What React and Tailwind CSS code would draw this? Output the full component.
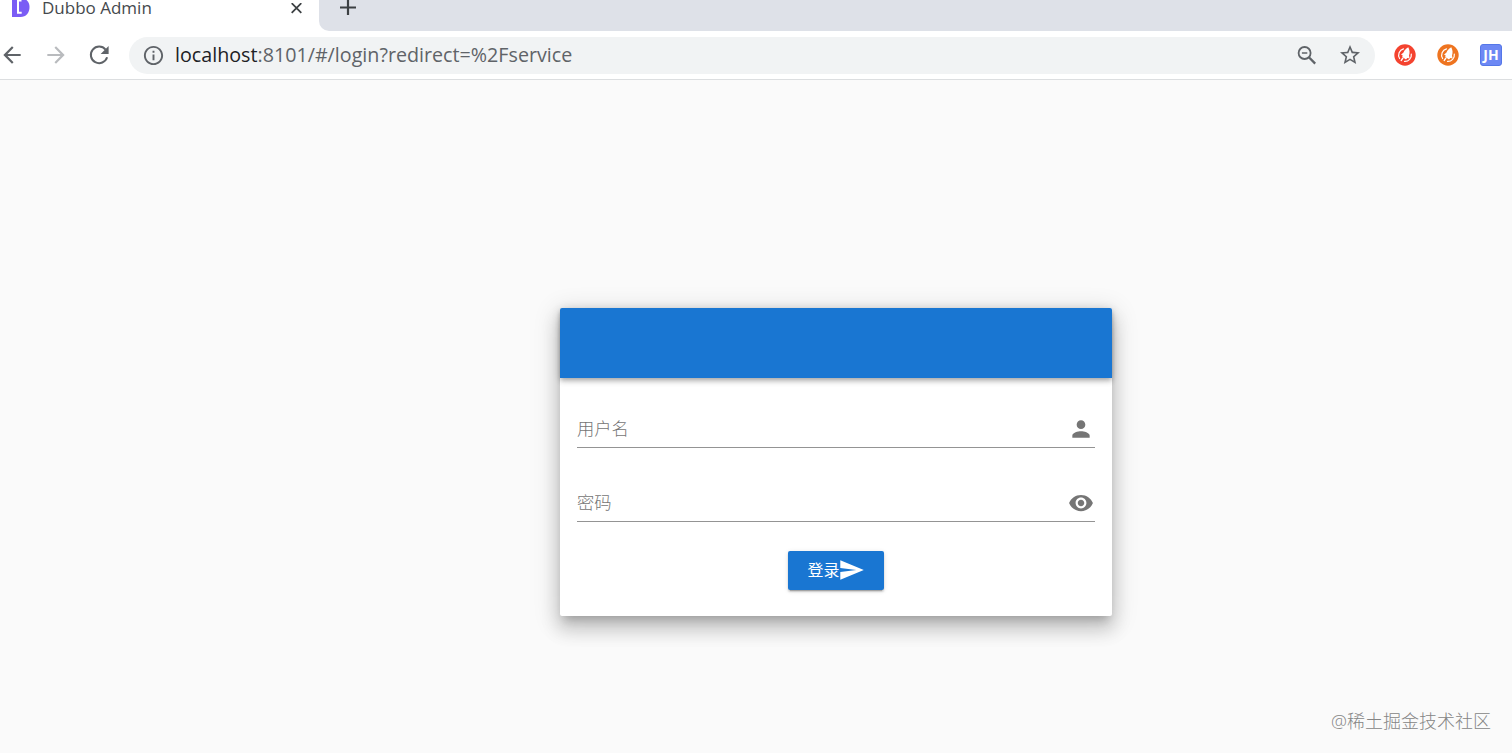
import React from 'react';
import {
    MdArrowBack,
    MdArrowForward,
    MdInfoOutline,
    MdPerson,
    MdStarBorder,
    MdVisibility,
} from 'react-icons/md';

function RocketBadge({ color }) {
    return (
        <svg width="22" height="22" viewBox="0 0 22 22" className="shrink-0">
            <circle cx="11" cy="11" r="10.7" fill={color}/>
            <path d="M9.500 4.800A6.500 6.500 0 0 0 5.600 14.500M10.500 17.400A6.500 6.500 0 0 0 17.300 10" fill="none" stroke="#fff" strokeWidth="1.200" strokeLinecap="round"/>
            <path d="M14.300 3.300C15.800 6.500 15.900 9 15 11.500L15.600 14.500L13.300 14L12 15.500L8.300 13L8.500 11L6.900 10.800L9.500 8.500C10.500 6.200 12 4.500 14.300 3.300z" fill="#fff"/>
            <path d="M8.800 14.200l-1.500 2.200" stroke="#fff" strokeWidth="1.500" strokeLinecap="round"/>
        </svg>
    );
}

function ReloadIcon() {
    return (
        <svg width="28" height="28" viewBox="0 0 28 28" className="ml-4 shrink-0">
            <path d="M20.600 8.600A8.300 8.300 0 1 0 22.100 16.300" fill="none" stroke="currentColor" strokeWidth="2"/>
            <path d="M23.600 5v8h-8z" fill="currentColor"/>
        </svg>
    );
}

function ZoomOutIcon() {
    return (
        <svg width="25" height="25" viewBox="0 0 25 25" className="shrink-0">
            <circle cx="10.600" cy="10" r="6" fill="none" stroke="currentColor" strokeWidth="1.800"/>
            <path d="M7.900 10h5.400" stroke="currentColor" strokeWidth="1.500"/>
            <path d="M14.900 14.300l6.300 6.300" stroke="currentColor" strokeWidth="2.300"/>
        </svg>
    );
}

function SendIcon() {
    return (
        <svg width="25" height="20" viewBox="0 0 25 20" className="shrink-0">
            <path d="M0.300 0.300L23.800 10L0.300 19.700V12L16.300 10L0.300 8z" fill="currentColor"/>
        </svg>
    );
}

function TabStrip() {
    return (
        <div className="flex h-[31px] bg-white">
            <div className="flex h-[17px] w-[319px] shrink-0 items-center pl-[11px]">
                <svg width="19" height="17" viewBox="0 0 19 17" className="shrink-0">
                    <path d="M1 0h14.500c2 1.700 3 4 3 7 0 6-3.500 10-9 10H1z" fill="#7a5cf5"/>
                    <path d="M10.500 0.500H7v12.300h3.700" fill="none" stroke="#fff" strokeWidth="2"/>
                </svg>
                <span className="ml-3 w-[249px] pb-0.5 text-[17px] leading-[17px] text-[#45494d]">Dubbo Admin</span>
                <svg width="11" height="12" viewBox="0 0 11 12" className="shrink-0">
                    <path d="M0.700 0.200l9.600 9.600M10.300 0.200l-9.600 9.600" stroke="#3c4043" strokeWidth="1.800"/>
                </svg>
            </div>
            <div className="flex flex-1 rounded-bl-[10px] bg-[#dee1e8] pl-[21px]">
                <svg width="16" height="16" viewBox="0 0 16 16" className="shrink-0">
                    <path d="M8 0v15M0 7.500h16" stroke="#3c4043" strokeWidth="2.200"/>
                </svg>
            </div>
        </div>
    );
}

function Toolbar() {
    return (
        <div className="flex h-[49px] items-center border-b border-[#dcdee0] bg-white pr-[10px] text-[#5f6368]">
            <MdArrowBack size={26} className="-ml-px shrink-0"/>
            <MdArrowForward size={26} className="ml-[18px] shrink-0 text-[#b9bbbe]"/>
            <ReloadIcon/>
            <div className="ml-4 flex h-[37px] flex-1 items-center rounded-full bg-[#f1f3f4] pl-[13px] pr-[13px]">
                <MdInfoOutline size={23} className="shrink-0"/>
                <span className="ml-[10px] flex-1 whitespace-nowrap text-[19.700px] leading-none">
                    <span className="text-[#202124]">localhost</span>:8101/#/login?redirect=%2Fservice
                </span>
                <ZoomOutIcon/>
                <MdStarBorder size={24} className="ml-[19px] shrink-0"/>
            </div>
            <div className="ml-[19px] flex items-center gap-[21px]">
                <RocketBadge color="#f4432f"/>
                <RocketBadge color="#ee7420"/>
                <div className="flex h-[22px] w-[22px] items-center justify-center rounded-[3px] border border-[#5577e8] bg-[#6d88f4] text-[14px] font-bold leading-none text-white">
                    JH
                </div>
            </div>
        </div>
    );
}

function Field({ label, icon: Icon }) {
    return (
        <div className="flex h-[37px] items-center justify-between border-b border-[#949494] pr-px text-[#757575]">
            <span className="text-[17.300px] font-light leading-none">{label}</span>
            <Icon size={26} className="shrink-0"/>
        </div>
    );
}

function LoginCard() {
    return (
        <div className="flex h-[308px] w-[552px] flex-col rounded-[2px] bg-white shadow-[0_7px_9px_-4px_rgba(0,0,0,0.2),0_13px_18px_2px_rgba(0,0,0,0.14),0_5px_24px_4px_rgba(0,0,0,0.12)]">
            <div className="h-[70px] rounded-t-[2px] bg-[#1976d2] shadow-[0_2px_4px_-1px_rgba(0,0,0,0.2),0_4px_5px_0_rgba(0,0,0,0.14),0_1px_10px_0_rgba(0,0,0,0.12)]"/>
            <div className="flex flex-col gap-[37px] px-[17px] pt-[33px]">
                <Field label="用户名" icon={MdPerson}/>
                <Field label="密码" icon={MdVisibility}/>
            </div>
            <button
                type="button"
                className="mt-[29px] flex h-[39px] w-[96px] items-center justify-center self-center rounded-[2px] bg-[#1976d2] pb-px text-white shadow-[0_3px_1px_-2px_rgba(0,0,0,0.2),0_2px_2px_0_rgba(0,0,0,0.14),0_1px_5px_0_rgba(0,0,0,0.12)]">
                <span className="text-[16px] leading-none">登录</span>
                <SendIcon/>
            </button>
        </div>
    );
}

function App() {
    return (
        <div className="flex h-screen flex-col overflow-hidden bg-[#fafafa] font-['Open_Sans','Noto_Sans_CJK_SC',sans-serif]">
            <TabStrip/>
            <Toolbar/>
            <main className="flex flex-1 flex-col pt-[228px]">
                <div className="pl-[560px]">
                    <LoginCard/>
                </div>
                <div className="mt-auto pb-[22px] pr-[21px] text-right text-[18px] font-light leading-[20px] text-[#858585]">
                    @稀土掘金技术社区
                </div>
            </main>
        </div>
    );
}

export default App;
